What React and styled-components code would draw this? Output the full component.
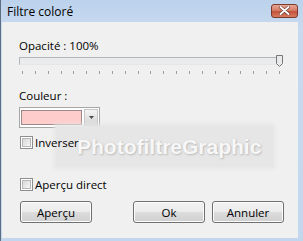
import styled, { createGlobalStyle } from "styled-components";

const GlobalStyle = createGlobalStyle`
  html, body {
    margin: 0;
    padding: 0;
    background: #f0f0f0;
  }
  body {
    font-family: "Open Sans", "Noto Sans", "Liberation Sans", sans-serif;
    font-size: 11.5px;
    color: #000;
  }
`;

const Window = styled.div`
  width: 303px;
  height: 241px;
  box-sizing: border-box;
  display: flex;
  flex-direction: column;
  background: linear-gradient(#bcd2ec, #c8daef 30px, #c2d7ee);
  border-left: 1px solid #5e6f82;
  overflow: hidden;
`;

const TitleBar = styled.div`
  height: 22px;
  flex: none;
  display: flex;
  align-items: center;
  justify-content: space-between;
  padding: 0 5px 0 6px;
`;

const Title = styled.span`
  font-size: 12px;
  color: #000;
  line-height: 14px;
  margin-top: 1px;
`;

const CloseButton = styled.div`
  width: 25px;
  height: 12px;
  margin-top: -1px;
  border: 1px solid #7a3a2e;
  border-radius: 3px;
  background: linear-gradient(#e8a593, #d47c66 45%, #c4523a 55%, #d77a5f);
  display: flex;
  align-items: center;
  justify-content: center;
`;

const Body = styled.div`
  flex: 1;
  position: relative;
  margin: 0 5px 3px 1px;
  background: #f0f0f0;
  padding: 16px 14px 0 17px;
  display: flex;
  flex-direction: column;
`;

const Label = styled.div`
  line-height: 15px;
  height: 15px;
  margin-top: ${(p) => p.$top || 0}px;
`;

const Slider = styled.div`
  position: relative;
  margin-top: 4px;
  width: 264px;
  display: flex;
  flex-direction: column;
`;

const Track = styled.div`
  height: 8px;
  box-sizing: border-box;
  border: 1px solid #b6b6b6;
  border-right-color: #dcdcdc;
  border-bottom-color: #e6e6e6;
  background: #e9ebec;
`;

const Ticks = styled.div`
  margin-top: 6px;
  padding: 0 3px 0 3px;
  display: flex;
  justify-content: space-between;
`;

const Tick = styled.div`
  width: 1px;
  height: 3px;
  background: #9c9c9c;
`;

const Thumb = styled.svg`
  position: absolute;
  right: 0;
  top: -2px;
`;

const Combo = styled.div`
  margin-top: 4px;
  width: 81px;
  height: 21px;
  box-sizing: border-box;
  border: 1px solid #a7a7a7;
  background: #fff;
  display: flex;
  align-items: stretch;
  padding: 1px;
  gap: 2px;
`;

const Swatch = styled.div`
  flex: 1;
  border: 1px solid #9a8a8a;
  background: #ffcccc;
  margin: 1px 0;
`;

const DropButton = styled.div`
  width: 14px;
  box-sizing: border-box;
  border: 1px solid #c6c6c6;
  background: linear-gradient(#f4f4f4, #e2e2e2 50%, #d5d5d5);
  display: flex;
  align-items: center;
  justify-content: center;
`;

const CheckRow = styled.label`
  position: relative;
  z-index: 1;
  align-self: flex-start;
  display: flex;
  align-items: center;
  gap: 2px;
  line-height: 15px;
  margin-top: ${(p) => p.$top || 0}px;
  margin-left: 1px;
`;

const CheckBox = styled.span`
  width: 13px;
  height: 13px;
  box-sizing: border-box;
  border: 1px solid #8e8f8f;
  background: #fff;
  padding: 1px;
  display: inline-flex;

  &::after {
    content: "";
    flex: 1;
    border: 1px solid #b8b8b8;
    background: linear-gradient(135deg, #d8d8d8, #f6f6f6);
  }
`;

const ButtonRow = styled.div`
  margin-top: 9px;
  margin-left: 1px;
  display: flex;
  gap: 7px;
`;

const Button = styled.div`
  width: 72px;
  height: 22px;
  box-sizing: border-box;
  border: 1px solid #707070;
  border-radius: 3px;
  background: linear-gradient(#f2f2f2, #ebebeb 50%, #dddddd 50%, #cfcfcf);
  box-shadow: inset 0 0 0 1px #fcfcfc;
  display: flex;
  align-items: center;
  justify-content: center;
  margin-left: ${(p) => p.$gapLeft || 0}px;
`;

const Watermark = styled.div`
  position: absolute;
  left: 54px;
  top: 104px;
  width: 217px;
  height: 41px;
  background: #e6e6e6;
  box-shadow: 0 0 4px 2px #e6e6e6;
  display: flex;
  align-items: center;
  padding-left: 21px;
  box-sizing: border-box;
  font-family: "Liberation Sans", Arial, sans-serif;
  font-weight: bold;
  font-size: 21px;
  color: #f7f7f7;
  text-shadow: 1px 1px 2px #bcbcbc, 0 0 1px #cccccc;
`;

const ticks = Array.from({ length: 21 });

export default function App() {
  return (
    <>
      <GlobalStyle />
      <Window>
        <TitleBar>
          <Title>Filtre coloré</Title>
          <CloseButton>
            <svg width="11" height="9" viewBox="0 0 11 9">
              <path
                d="M1.5 1 L9.5 8 M9.5 1 L1.5 8"
                stroke="#5a2a20"
                strokeWidth="3"
                strokeLinecap="round"
              />
              <path
                d="M1.5 1 L9.5 8 M9.5 1 L1.5 8"
                stroke="#ffffff"
                strokeWidth="2"
                strokeLinecap="round"
              />
            </svg>
          </CloseButton>
        </TitleBar>
        <Body>
          <Label>Opacité : 100%</Label>
          <Slider>
            <Track />
            <Ticks>
              {ticks.map((_, i) => (
                <Tick key={i} />
              ))}
            </Ticks>
            <Thumb width="7" height="12" viewBox="0 0 7 12">
              <path
                d="M0.5 0.5 H6.5 V8.5 L3.5 11.5 L0.5 8.5 Z"
                fill="#eaeaea"
                stroke="#777"
                strokeWidth="1"
              />
            </Thumb>
          </Slider>
          <Label $top={14}>Couleur :</Label>
          <Combo>
            <Swatch />
            <DropButton>
              <svg width="5" height="3" viewBox="0 0 5 3">
                <path d="M0 0 H5 L2.5 3 Z" fill="#4a4a4a" />
              </svg>
            </DropButton>
          </Combo>
          <CheckRow $top={7}>
            <CheckBox />
            Inverser
          </CheckRow>
          <CheckRow $top={27}>
            <CheckBox />
            Aperçu direct
          </CheckRow>
          <ButtonRow>
            <Button>Aperçu</Button>
            <Button $gapLeft={34}>Ok</Button>
            <Button>Annuler</Button>
          </ButtonRow>
          <Watermark>PhotofiltreGraphic</Watermark>
        </Body>
      </Window>
    </>
  );
}
